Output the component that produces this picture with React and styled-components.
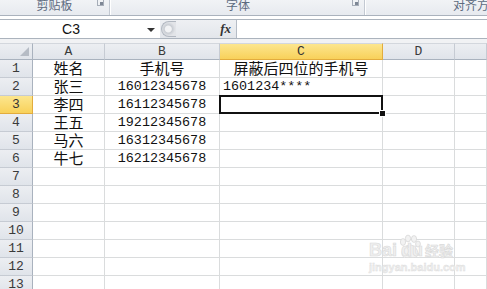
import React from "react";
import styled, { createGlobalStyle, css } from "styled-components";

const GlobalStyle = createGlobalStyle`
  html, body {
    margin: 0;
    padding: 0;
    background: #ffffff;
    overflow: hidden;
  }
`;

const Page = styled.div`
  position: relative;
  width: 487px;
  height: 289px;
  overflow: hidden;
  background: #ffffff;
  font-family: "Noto Sans CJK SC", sans-serif;
`;

const Ribbon = styled.div`
  display: flex;
  height: 15px;
  background: linear-gradient(#f1f3f6, #e7eaef);
  border-bottom: 1px solid #aab2bd;
  overflow: hidden;
`;

const Group = styled.div`
  position: relative;
  display: flex;
  justify-content: ${({ $left }) => ($left ? "flex-start" : "center")};
  padding-left: ${({ $left }) => ($left ? "86px" : "0")};
  width: ${({ $w }) => $w}px;
  flex-shrink: 0;
  border-right: 1px solid #c3c9d2;
  box-shadow: 1px 0 0 #ffffff;
  margin-right: 2px;
`;

const GroupLabel = styled.span`
  margin-top: -2px;
  font-size: 12px;
  line-height: 14px;
  color: #5d6b7f;
  white-space: nowrap;
`;

const Launcher = styled.span`
  position: absolute;
  right: 5px;
  top: 0;
  width: 7px;
  height: 6px;
  border: 1px solid #a6adb8;
  border-top: none;
  box-sizing: border-box;

  &::after {
    content: "";
    position: absolute;
    right: 0;
    bottom: 0;
    width: 3px;
    height: 3px;
    background: #7e8795;
  }
`;

const FormulaBar = styled.div`
  display: flex;
  height: 18px;
  margin-top: 3px;
  border-top: 1px solid #abb3bd;
  border-bottom: 1px solid #abb3bd;
`;

const NameBox = styled.div`
  position: relative;
  width: 160px;
  display: flex;
  align-items: center;
  justify-content: center;
  padding-right: 18px;
  box-sizing: border-box;
  background: #fff;
  font-family: "Liberation Sans", sans-serif;
  font-size: 14px;
  color: #111;
`;

const DropArrow = styled.span`
  position: absolute;
  right: 5px;
  top: 8px;
  border-left: 4px solid transparent;
  border-right: 4px solid transparent;
  border-top: 4px solid #333;
`;

const ToolArea = styled.div`
  display: flex;
  align-items: center;
  justify-content: space-between;
  width: 77px;
  padding-right: 5px;
  box-sizing: border-box;
  background: linear-gradient(#eef0f3, #e3e6eb);
  border-right: 1px solid #b5bcc6;
`;

const Splitter = styled.span`
  width: 15px;
  height: 16px;
  margin-left: 1px;
  border-radius: 8px 0 0 8px;
  border: 1px solid #b2b8c1;
  border-right: none;
  box-sizing: border-box;
  background: radial-gradient(circle at 45% 50%, #f2f3f5 0 3px, #c9cdd3 4px, #e2e4e8 7px);
`;

const Fx = styled.span`
  font-family: "Liberation Serif", serif;
  font-style: italic;
  font-weight: bold;
  font-size: 13px;
  color: #333;
`;

const FormulaInput = styled.div`
  flex: 1;
  background: #fff;
`;

const Gap = styled.div`
  height: 4px;
  background: #f1f2f4;
`;

const Sheet = styled.div`
  display: grid;
  grid-template-columns: 33px 72px 115px 163px 72px 1fr;
  grid-auto-rows: 18px;
  grid-template-rows: 17px;
`;

const headerLook = css`
  background: linear-gradient(#eceef2, #e0e4ea);
  color: #3a3a3a;
  font-family: "Liberation Mono", monospace;
  font-size: 13px;
  ${({ $active }) =>
    $active &&
    css`
      background: linear-gradient(#fce68e, #f8d15a);
      color: #333;
    `}
`;

const ColHead = styled.div`
  ${headerLook}
  display: flex;
  align-items: center;
  justify-content: center;
  box-sizing: border-box;
  border-right: 1px solid ${({ $active }) => ($active ? "#e2ac3d" : "#c6cbd3")};
  border-bottom: 1px solid ${({ $active }) => ($active ? "#e2ac3d" : "#a9b2be")};
  border-top: 1px solid #d3d7dd;
`;

const Corner = styled(ColHead)`
  position: relative;
  border-right: 1px solid #a9b2be;

  &::after {
    content: "";
    position: absolute;
    right: 3px;
    bottom: 3px;
    border-left: 9px solid transparent;
    border-bottom: 9px solid #b6bcc5;
  }
`;

const RowHead = styled.div`
  ${headerLook}
  display: flex;
  align-items: flex-end;
  justify-content: center;
  padding-bottom: 1px;
  box-sizing: border-box;
  border-right: 1px solid ${({ $active }) => ($active ? "#e2ac3d" : "#a9b2be")};
  border-bottom: 1px solid ${({ $active }) => ($active ? "#e2ac3d" : "#c6cbd3")};
  line-height: 15px;
`;

const Cell = styled.div`
  position: relative;
  display: flex;
  align-items: flex-end;
  justify-content: ${({ $align }) => $align || "center"};
  padding: 0 0 1px ${({ $align }) => ($align === "flex-start" ? "3px" : "0")};
  box-sizing: border-box;
  border-right: 1px solid #dadcdd;
  border-bottom: 1px solid #dadcdd;
  white-space: nowrap;
  color: #111;
  font-family: ${({ $cjk }) =>
    $cjk ? '"Noto Sans CJK SC", sans-serif' : '"Liberation Mono", monospace'};
  font-size: ${({ $cjk }) => ($cjk ? "15px" : "13.4px")};
  line-height: ${({ $cjk }) => ($cjk ? "16px" : "15px")};

  ${({ $selected }) =>
    $selected &&
    css`
      &::after {
        content: "";
        position: absolute;
        left: -1px;
        top: -1px;
        right: -1px;
        bottom: -1px;
        border: 2px solid #111;
        z-index: 2;
      }
    `}
`;

const FillHandle = styled.span`
  position: absolute;
  right: -4px;
  bottom: -4px;
  width: 5px;
  height: 5px;
  background: #111;
  border: 1px solid #fff;
  z-index: 3;
`;

const Watermark = styled.div`
  position: absolute;
  left: 369px;
  top: 234px;
  display: flex;
  flex-direction: column;
  color: #efefef;
  pointer-events: none;
`;

const MarkTop = styled.div`
  display: flex;
  align-items: flex-end;
  font-family: "Liberation Sans", sans-serif;
  font-weight: bold;
  font-size: 18px;
  line-height: 20px;
  -webkit-text-stroke: 0.6px #dadada;
`;

const MarkCjk = styled.span`
  font-family: "Noto Sans CJK SC", sans-serif;
  font-size: 14px;
  margin-left: 2px;
`;

const MarkUrl = styled.div`
  margin-top: 1px;
  font-family: "Liberation Sans", sans-serif;
  font-weight: bold;
  font-size: 11px;
  -webkit-text-stroke: 0.4px #dcdcdc;
`;

const Paw = () => (
  <svg width="26" height="26" viewBox="0 0 26 26" style={{ marginLeft: -1, marginRight: -22 }}>
    <g fill="#f2f2f2" stroke="#d8d8d8" strokeWidth="0.8">
      <ellipse cx="7" cy="8" rx="2.6" ry="3.4" />
      <ellipse cx="12" cy="4.5" rx="2.6" ry="3.4" />
      <ellipse cx="18" cy="5" rx="2.6" ry="3.4" />
      <ellipse cx="22" cy="10" rx="2.4" ry="3" />
      <path d="M6 20 C6 14 10 11 14 11 C18 11 22 15 22 20 C22 24 17 24 14 23 C11 24 6 24 6 20 Z" />
    </g>
  </svg>
);

const rows = [
  ["姓名", "手机号", "屏蔽后四位的手机号"],
  ["张三", "16012345678", "1601234****"],
  ["李四", "16112345678", ""],
  ["王五", "19212345678", ""],
  ["马六", "16312345678", ""],
  ["牛七", "16212345678", ""],
];

const columns = ["A", "B", "C", "D", ""];

export default function App() {
  const all = Array.from({ length: 13 }, (_, i) => rows[i] || ["", "", ""]);

  return (
    <Page>
      <GlobalStyle />
      <Ribbon>
        <Group $w={109}>
          <GroupLabel>剪贴板</GroupLabel>
          <Launcher />
        </Group>
        <Group $w={252}>
          <GroupLabel>字体</GroupLabel>
          <Launcher />
        </Group>
        <Group $w={240} $left>
          <GroupLabel>对齐方式</GroupLabel>
        </Group>
      </Ribbon>

      <FormulaBar>
        <NameBox>
          C3
          <DropArrow />
        </NameBox>
        <ToolArea>
          <Splitter />
          <Fx>fx</Fx>
        </ToolArea>
        <FormulaInput />
      </FormulaBar>
      <Gap />

      <Sheet>
        <Corner />
        {columns.map((c) => (
          <ColHead key={c || "E"} $active={c === "C"}>
            {c}
          </ColHead>
        ))}

        {all.map((r, i) => (
          <React.Fragment key={i}>
            <RowHead $active={i === 2}>{i + 1}</RowHead>
            <Cell $cjk>{r[0]}</Cell>
            <Cell $cjk={i === 0}>{r[1]}</Cell>
            {i === 0 ? (
              <Cell $cjk>{r[2]}</Cell>
            ) : i === 2 ? (
              <Cell $selected>
                <FillHandle />
              </Cell>
            ) : (
              <Cell $align="flex-start">{r[2]}</Cell>
            )}
            <Cell />
            <Cell />
          </React.Fragment>
        ))}
      </Sheet>

      <Watermark>
        <MarkTop>
          Bai
          <Paw />
          <span style={{ marginLeft: 1 }}>du</span>
          <MarkCjk>经验</MarkCjk>
        </MarkTop>
        <MarkUrl>jingyan.baidu.com</MarkUrl>
      </Watermark>
    </Page>
  );
}
